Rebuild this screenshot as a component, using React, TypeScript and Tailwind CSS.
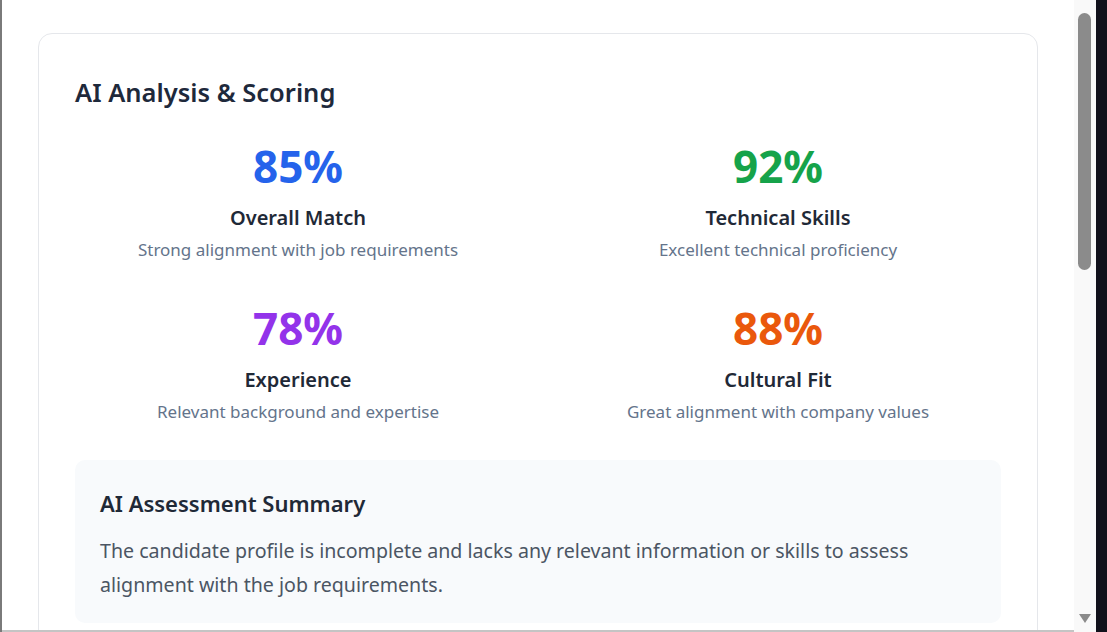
import React from "react";

const font = { fontFamily: '"Noto Sans", "Open Sans", sans-serif' };

type Score = { value: string; color: string; title: string; desc: string };

const scores: Score[] = [
  { value: "85%", color: "text-[#2563eb]", title: "Overall Match", desc: "Strong alignment with job requirements" },
  { value: "92%", color: "text-[#16a34a]", title: "Technical Skills", desc: "Excellent technical proficiency" },
  { value: "78%", color: "text-[#9333ea]", title: "Experience", desc: "Relevant background and expertise" },
  { value: "88%", color: "text-[#ea580c]", title: "Cultural Fit", desc: "Great alignment with company values" },
];

function ScoreCell({ s }: { s: Score }) {
  return (
    <div className="flex flex-col items-center text-center">
      <div className={`text-[44px] leading-[52px] font-bold ${s.color}`}>{s.value}</div>
      <div className="mt-[12px] text-[20px] leading-[28px] font-semibold text-[#1f2937]">{s.title}</div>
      <div className="mt-[5px] text-[17px] leading-[26px] text-[#64748b]">{s.desc}</div>
    </div>
  );
}

export default function App() {
  return (
    <div className="w-[1107px] h-[632px] overflow-hidden flex bg-white" style={font}>
      <div className="w-[2px] h-full bg-[#7a7a7a]" />
      <div className="flex-1 h-full flex flex-col">
        <div className="flex-1 overflow-hidden pt-[33px] px-[36px]">
          <div className="rounded-[14px] border border-[#e5e7eb] bg-white pt-[40px] px-[36px] pb-[36px]">
            <h2 className="text-[25.5px] leading-[36px] font-semibold text-[#1e293b]">AI Analysis &amp; Scoring</h2>
            <div className="mt-[30px] grid grid-cols-2 gap-x-[34px] gap-y-[39px]">
              {scores.map((s) => (
                <ScoreCell key={s.title} s={s} />
              ))}
            </div>
            <div className="mt-[35px] rounded-[10px] bg-[#f8fafc] px-[25px] pt-[28px] pb-[21px]">
              <h3 className="text-[22px] leading-[30px] font-semibold text-[#1f2937]">AI Assessment Summary</h3>
              <p className="mt-[16px] text-[19.6px] leading-[34px] text-[#4b5563]">
                The candidate profile is incomplete and lacks any relevant information or skills to assess alignment with the job requirements.
              </p>
            </div>
          </div>
        </div>
        <div className="h-[2px] bg-[#c4c4c4]" />
      </div>
      <div className="w-[22px] h-full bg-[#f9f9f9] relative">
        <div className="absolute left-[4px] top-[13px] w-[13px] h-[257px] rounded-full bg-[#8b8b8b]" />
        <svg className="absolute left-[5px] top-[614px]" width="12" height="10" viewBox="0 0 12 10">
          <path d="M0 0 L12 0 L6 9 Z" fill="#8b8b8b" />
        </svg>
      </div>
      <div className="w-[11px] h-full bg-[#11111b]" />
    </div>
  );
}
